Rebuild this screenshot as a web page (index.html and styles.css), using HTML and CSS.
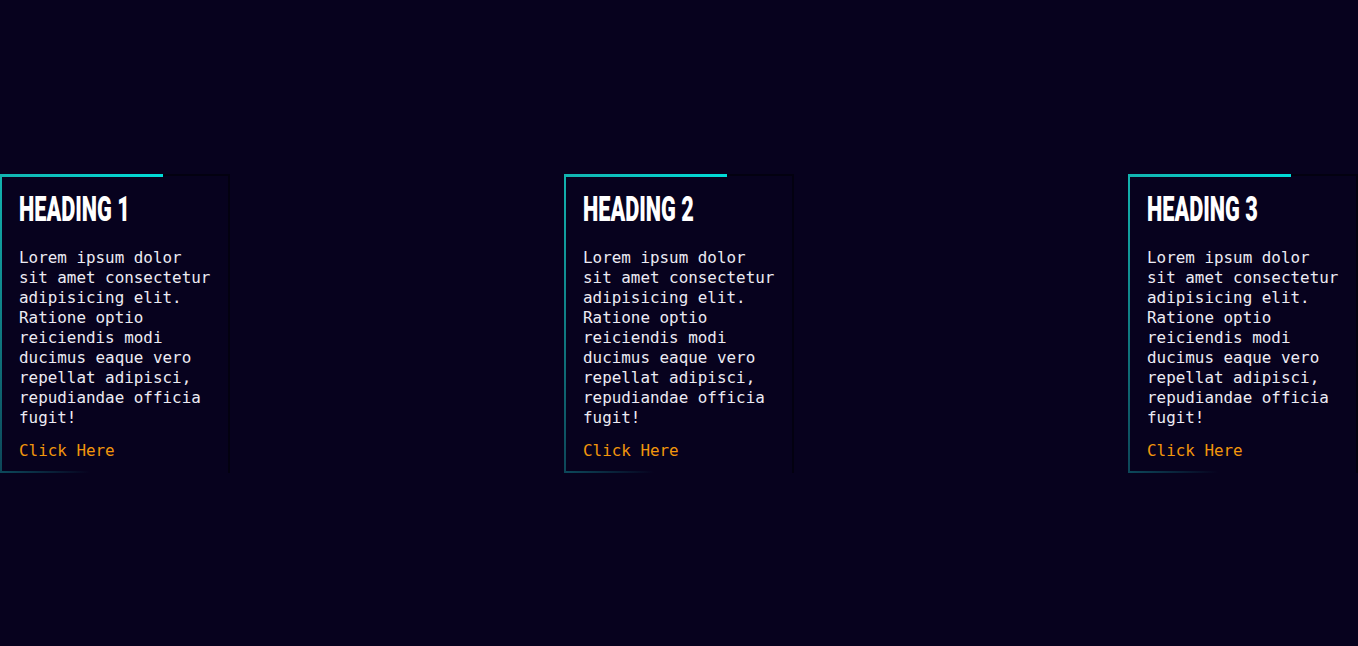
FILE: index.html
```html
<!DOCTYPE html>
<html lang="en">
<head>
<meta charset="utf-8">
<title>Cards</title>
<link rel="stylesheet" href="styles.css">
</head>
<body>
<main class="row">
  <article class="card">
    <h2 class="card-title"><span>Heading 1</span></h2>
    <p class="card-text">Lorem ipsum dolor sit amet consectetur adipisicing elit. Ratione optio reiciendis modi ducimus eaque vero repellat adipisci, repudiandae officia fugit!</p>
    <a class="card-link" href="#">Click Here</a>
  </article>
  <article class="card">
    <h2 class="card-title"><span>Heading 2</span></h2>
    <p class="card-text">Lorem ipsum dolor sit amet consectetur adipisicing elit. Ratione optio reiciendis modi ducimus eaque vero repellat adipisci, repudiandae officia fugit!</p>
    <a class="card-link" href="#">Click Here</a>
  </article>
  <article class="card">
    <h2 class="card-title"><span>Heading 3</span></h2>
    <p class="card-text">Lorem ipsum dolor sit amet consectetur adipisicing elit. Ratione optio reiciendis modi ducimus eaque vero repellat adipisci, repudiandae officia fugit!</p>
    <a class="card-link" href="#">Click Here</a>
  </article>
</main>
</body>
</html>
```

FILE: styles.css
```css
* { box-sizing: border-box; }
html, body { margin: 0; padding: 0; }
body {
  background: #07021e;
  min-height: 100vh;
  font-family: "DejaVu Sans Mono", "Liberation Mono", monospace;
}
.row {
  min-height: 100vh;
  display: flex;
  align-items: center;
  justify-content: space-between;
}
.card {
  position: relative;
  width: 230px;
  padding: 14px 14px 12px 19px;
  border-top: 2px solid #030110;
  border-right: 2px solid #030110;
}
.card::before {
  content: "";
  position: absolute;
  left: 0;
  top: -2px;
  width: 163px;
  height: 3px;
  background: linear-gradient(to right, #12b4b0, #00dcd8);
}
.card::after {
  content: "";
  position: absolute;
  left: 0;
  top: -2px;
  bottom: 0;
  width: 2px;
  background: linear-gradient(to bottom, #12b4b0, #0d4658);
}
.card-title {
  margin: 0 0 18px;
  height: 40px;
  font-family: Roboto, "Liberation Sans", sans-serif;
  font-weight: 900;
  font-size: 35px;
  line-height: 40px;
  text-transform: uppercase;
  color: #ffffff;
  white-space: nowrap;
}
.card-title span {
  display: inline-block;
  transform: scaleX(0.62);
  transform-origin: left center;
}
.card-text {
  margin: 0 0 13px;
  font-size: 15.9px;
  line-height: 20px;
  color: #ecebf3;
}
.card-link {
  display: block;
  font-size: 15.9px;
  line-height: 20px;
  color: #f2960c;
  text-decoration: none;
  position: relative;
}
.card-link::after {
  content: "";
  position: absolute;
  left: -19px;
  bottom: -12px;
  width: 90px;
  height: 2px;
  background: linear-gradient(to right, #0c4a5c, rgba(12, 74, 92, 0));
}
```
